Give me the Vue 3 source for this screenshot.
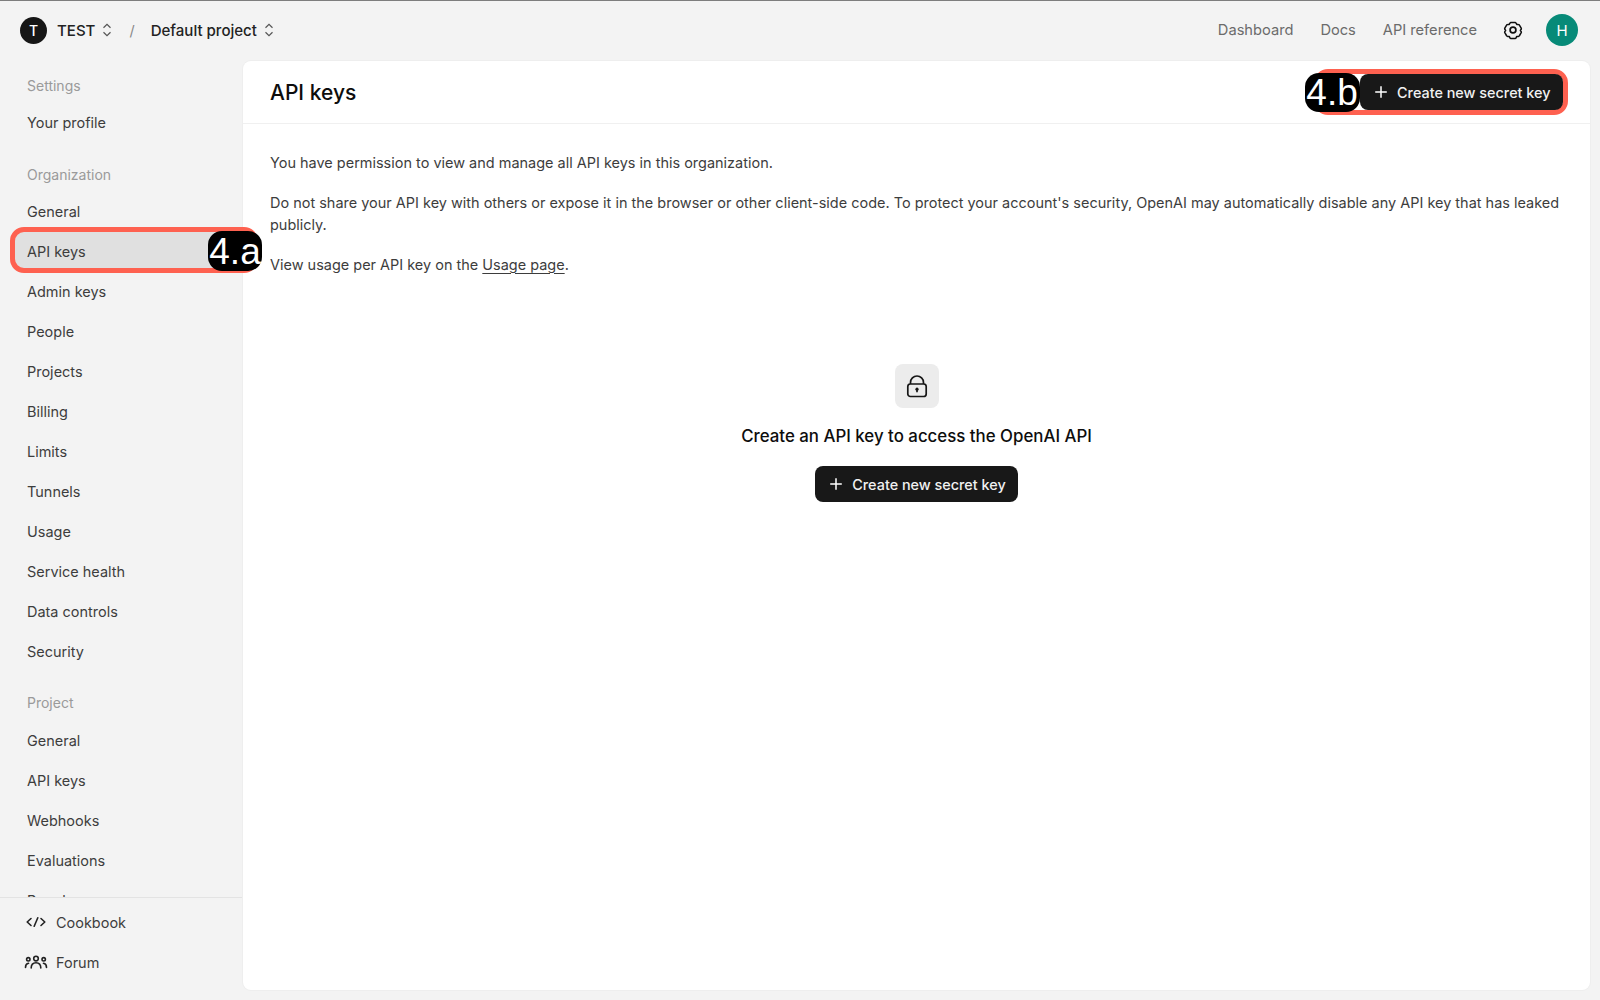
<template>
  <div class="page">
    <header class="top">
      <div class="crumbs">
        <span class="org">T</span>
        <span class="crumb">TEST</span>
        <svg class="chev" width="12" height="16" viewBox="0 0 12 16"><path d="M2.500 5.800 6 2.400l3.500 3.400M2.500 10.200 6 13.600l3.500-3.400" /></svg>
        <span class="slash">/</span>
        <span class="crumb">Default project</span>
        <svg class="chev" width="12" height="16" viewBox="0 0 12 16"><path d="M2.500 5.800 6 2.400l3.500 3.400M2.500 10.200 6 13.600l3.500-3.400" /></svg>
      </div>
      <nav class="topnav">
        <a>Dashboard</a>
        <a>Docs</a>
        <a>API reference</a>
        <svg class="gear" width="20" height="20" viewBox="0 0 20 20"><path d="M7.700 1.600h4.600c.5 0 .9.300 1.100.700l.8 1.500 1.800.1c.5 0 .9.300 1.100.700l2 3.400c.2.400.2.900 0 1.200l-.9 1.300.9 1.300c.2.400.2.800 0 1.200l-2 3.400c-.2.400-.6.700-1.100.700l-1.800.1-.8 1.500c-.2.400-.6.700-1.100.700H7.700c-.5 0-.9-.3-1.100-.7l-.8-1.500-1.800-.1c-.5 0-.9-.3-1.100-.7l-2-3.400c-.2-.4-.2-.8 0-1.200l.9-1.300-.9-1.300c-.2-.4-.2-.8 0-1.200l2-3.400c.2-.4.600-.7 1.100-.7l1.800-.1.800-1.500c.2-.4.600-.7 1.100-.7z" transform="translate(1 1) scale(.9)" /><circle cx="10" cy="10" r="2.900" /></svg>
        <span class="avatar">H</span>
      </nav>
    </header>
    <div class="body">
      <aside class="side">
        <div class="scroll">
          <section v-for="g in groups" :key="g.title" class="group">
            <h4>{{ g.title }}</h4>
            <a v-for="(it, i) in g.items" :key="i" class="item" :class="{ active: g.title === 'Organization' && it === 'API keys' }">{{ it }}</a>
          </section>
        </div>
        <div class="foot">
          <a class="item link">
            <svg width="24" height="16" viewBox="0 0 24 16"><path d="M7 4.500 3.200 8 7 11.500M17 4.500 20.800 8 17 11.500M13.800 3.800l-3.600 8.400" /></svg>
            <span>Cookbook</span>
          </a>
          <a class="item link">
            <svg width="24" height="16" viewBox="0 0 24 16"><circle cx="12" cy="4.600" r="2.300" /><path d="M7.200 14c0-3.300 2-5.300 4.800-5.300s4.800 2 4.800 5.300" /><circle cx="4.300" cy="5.300" r="1.700" /><circle cx="19.700" cy="5.300" r="1.700" /><path d="M1.500 13.500c0-2.400 1-3.800 3-4.200M22.500 13.500c0-2.400-1-3.800-3-4.200" /></svg>
            <span>Forum</span>
          </a>
        </div>
      </aside>
      <main class="panel">
        <div class="phead">
          <h1>API keys</h1>
          <div class="hl-b">
            <span class="badge">4.b</span>
            <button class="btn"><svg width="14" height="14" viewBox="0 0 14 14"><path d="M7 1.200v11.600M1.200 7h11.600" /></svg>Create new secret key</button>
          </div>
        </div>
        <div class="copy">
          <p>You have permission to view and manage all API keys in this organization.</p>
          <p>Do not share your API key with others or expose it in the browser or other client-side code. To protect your account's security, OpenAI may automatically disable any API key that has leaked publicly.</p>
          <p>View usage per API key on the <u>Usage page</u>.</p>
        </div>
        <div class="empty">
          <div class="lock">
            <svg width="22" height="24" viewBox="0 0 22 24"><rect x="1.800" y="10" width="18.400" height="12.500" rx="2.600" /><path d="M4.500 10V8.500a6.500 6.500 0 0 1 13 0V10" /><circle class="dot" cx="11" cy="15.200" r="1.600" /><path d="M11 15.500v2.800" /></svg>
          </div>
          <h2>Create an API key to access the OpenAI API</h2>
          <button class="btn"><svg width="14" height="14" viewBox="0 0 14 14"><path d="M7 1.200v11.600M1.200 7h11.600" /></svg>Create new secret key</button>
        </div>
      </main>
    </div>
    <div class="hl-a"><span class="badge">4.a</span></div>
  </div>
</template>

<script setup>
const groups = [
  { title: 'Settings', items: ['Your profile'] },
  { title: 'Organization', items: ['General', 'API keys', 'Admin keys', 'People', 'Projects', 'Billing', 'Limits', 'Tunnels', 'Usage', 'Service health', 'Data controls', 'Security'] },
  { title: 'Project', items: ['General', 'API keys', 'Webhooks', 'Evaluations', 'People', 'Limits'] }
]
</script>

<style>
html, body { margin: 0; background: #f3f3f3; }
</style>

<style scoped>
.page {
  position: relative;
  width: 1600px;
  height: 1000px;
  overflow: hidden;
  box-sizing: border-box;
  border-top: 1px solid #7d7d7d;
  background: #f3f3f3;
  font-family: Inter, "Liberation Sans", sans-serif;
  font-size: 14.470px;
  color: #3d3d3d;
  display: flex;
  flex-direction: column;
}
.top {
  height: 60px;
  flex: none;
  box-sizing: border-box;
  display: flex;
  align-items: center;
  justify-content: space-between;
  padding: 0 22px 2px 20px;
}
.crumbs { display: flex; align-items: center; }
.org {
  width: 27px; height: 27px; border-radius: 50%;
  background: #161616; color: #fff;
  display: flex; align-items: center; justify-content: center;
  font-size: 14px; font-weight: 500;
  margin-right: 10px;
}
.crumb { font-weight: 500; color: #222; font-size: 15.050px; }
.chev { margin-left: 6px; }
.chev path { fill: none; stroke: #555; stroke-width: 1.200; }
.slash { margin: 0 16px; color: #888; }
.topnav { display: flex; align-items: center; font-size: 14.650px; }
.topnav a { color: #6b6b6b; margin-right: 27px; }
.gear { margin-left: -1px; margin-right: 23px; }
.gear path, .gear circle { fill: none; stroke: #111; stroke-width: 1.700; stroke-linejoin: round; }
.avatar {
  width: 32px; height: 32px; border-radius: 50%;
  background: #078a78; color: #fff;
  display: flex; align-items: center; justify-content: center;
  font-size: 15px;
}
.body { flex: 1; display: flex; min-height: 0; padding: 0 10px 10px 0; }
.side { width: 243px; flex: none; display: flex; flex-direction: column; margin-bottom: -10px; }
.scroll { flex: 1; overflow: hidden; min-height: 0; padding-top: 0.500px; }
.group { margin-bottom: 16px; }
.group:first-child { margin-bottom: 15.500px; }
.group h4 {
  margin: 8px 0 0; padding: 0 27px 2px; height: 33px;
  box-sizing: border-box;
  display: flex; align-items: center;
  font-weight: 400; font-size: 14px; color: #9a9a9a;
}
.group:nth-child(2) h4 { padding-bottom: 0; }
.item {
  height: 40px; display: flex; align-items: center;
  padding: 0 27px; color: #3d3d3d;
}
.active { background: #e0e0e0; margin: 0 0 0 14px; padding-left: 13px; border-radius: 8px 0 0 8px; }
.foot { border-top: 1px solid #e3e3e3; flex: none; height: 103px; box-sizing: border-box; padding-top: 4px; }
.link { padding: 0 24px; gap: 8px; }
.link svg { flex: none; }
.link svg * { fill: none; stroke: #222; stroke-width: 1.600; stroke-linecap: round; stroke-linejoin: round; }
.panel {
  flex: 1; background: #fff; border-radius: 8px;
  display: flex; flex-direction: column; min-width: 0;
  box-shadow: 0 0 0 1px #eeeeee;
}
.phead {
  height: 63px; box-sizing: border-box; flex: none;
  display: flex; align-items: center; justify-content: space-between;
  padding: 0 22px 0 27px;
  border-bottom: 1px solid #f0f0f0;
}
h1 { margin: 0; font-size: 21px; font-weight: 500; color: #0d0d0d; }
.hl-b {
  display: flex; align-items: center; position: relative;
  background: #fff; border-radius: 14px;
  border: 5px solid #fe6150;
  padding-left: 41px;
}
.badge {
  background: #000; color: #fff; border-radius: 14px;
  font-family: "Liberation Sans", sans-serif;
  font-size: 37px; line-height: 1;
  display: flex; align-items: center; justify-content: center;
}
.hl-b .badge { position: absolute; left: -14px; top: -1px; width: 55px; height: 39px; z-index: 1; }
.btn {
  border: 0; background: #181818; color: #f1f1f1;
  font: 500 14.400px Inter, "Liberation Sans", sans-serif;
  height: 36px; border-radius: 8px;
  display: flex; align-items: center; gap: 9px;
  padding: 0 12.500px 0 14.500px;
}
.btn svg path { fill: none; stroke: #fff; stroke-width: 1.500; }
.copy { padding: 28px 27px 0; }
.copy p { margin: 0 0 17px; line-height: 22.500px; }
u { text-underline-offset: 3px; text-decoration-thickness: 1px; }
.empty { display: flex; flex-direction: column; align-items: center; padding-top: 71px; }
.lock {
  width: 44px; height: 44px; border-radius: 8px; background: #ececec;
  display: flex; align-items: center; justify-content: center;
}
.lock svg * { fill: none; stroke: #161616; stroke-width: 1.700; }
.lock svg .dot { fill: #161616; stroke: none; }
.empty h2 { margin: 16px 0 0; font-size: 16.850px; line-height: 24px; font-weight: 500; color: #0d0d0d; }
.empty .btn { margin-top: 18px; }
.hl-a {
  position: absolute; left: 10px; top: 226px;
  width: 248px; height: 46px; box-sizing: border-box;
  border: 5px solid #fe6150; border-radius: 14px;
}
.hl-a .badge { position: absolute; left: 193px; top: -1px; width: 54px; height: 40px; }
</style>
